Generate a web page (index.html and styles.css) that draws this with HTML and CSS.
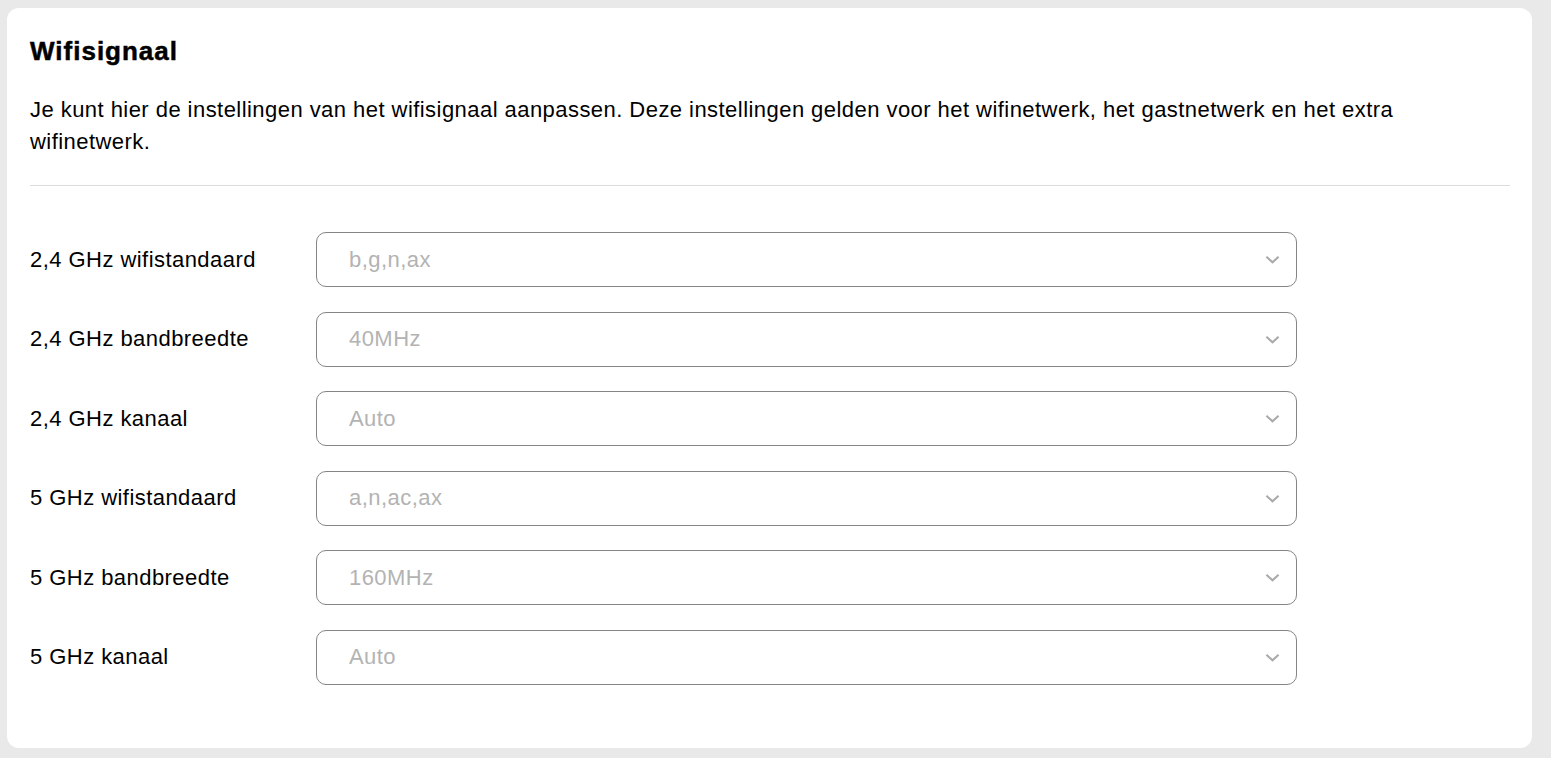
FILE: index.html
```html
<!DOCTYPE html>
<html lang="nl">
<head>
    <meta charset="UTF-8">
    <meta name="viewport" content="width=device-width, initial-scale=1.0">
    <title>Wifisignaal</title>
    <link rel="stylesheet" href="styles.css">
</head>
<body>
    <section class="card">
        <h1 class="card-title">Wifisignaal</h1>
        <p class="intro">Je kunt hier de instellingen van het wifisignaal aanpassen. Deze instellingen gelden voor het wifinetwerk, het gastnetwerk en het extra wifinetwerk.</p>
        <hr class="divider">
        <div class="settings">
            <div class="row">
                <label>2,4 GHz wifistandaard</label>
                <div class="select"><span>b,g,n,ax</span><svg class="chevron" viewBox="0 0 16 9"><path d="M1.5 1.5l6.5 6 6.5-6"/></svg></div>
            </div>
            <div class="row">
                <label>2,4 GHz bandbreedte</label>
                <div class="select"><span>40MHz</span><svg class="chevron" viewBox="0 0 16 9"><path d="M1.5 1.5l6.5 6 6.5-6"/></svg></div>
            </div>
            <div class="row">
                <label>2,4 GHz kanaal</label>
                <div class="select"><span>Auto</span><svg class="chevron" viewBox="0 0 16 9"><path d="M1.5 1.5l6.5 6 6.5-6"/></svg></div>
            </div>
            <div class="row">
                <label>5 GHz wifistandaard</label>
                <div class="select"><span>a,n,ac,ax</span><svg class="chevron" viewBox="0 0 16 9"><path d="M1.5 1.5l6.5 6 6.5-6"/></svg></div>
            </div>
            <div class="row">
                <label>5 GHz bandbreedte</label>
                <div class="select"><span>160MHz</span><svg class="chevron" viewBox="0 0 16 9"><path d="M1.5 1.5l6.5 6 6.5-6"/></svg></div>
            </div>
            <div class="row">
                <label>5 GHz kanaal</label>
                <div class="select"><span>Auto</span><svg class="chevron" viewBox="0 0 16 9"><path d="M1.5 1.5l6.5 6 6.5-6"/></svg></div>
            </div>
        </div>
    </section>
</body>
</html>
```

FILE: styles.css
```css
:root {
    --page-bg: #e9e9e9;
    --card-bg: #ffffff;
    --text-color: #000000;
    --muted-text: #b3b3b3;
    --border-color: #858585;
    --divider-color: #dcdcdc;
}
body {
    font-family: 'Liberation Sans', Arial, sans-serif;
    margin: 0;
    padding: 8px 19px 10px 7px;
    background-color: var(--page-bg);
    color: var(--text-color);
}
.card {
    background-color: var(--card-bg);
    border-radius: 12px;
    padding: 26px 22px 63px 23px;
}
.card-title {
    font-size: 26px;
    line-height: 34px;
    font-weight: 700;
    letter-spacing: 1px;
    -webkit-text-stroke: 0.5px #000;
    margin: 0 0 26px;
}
.intro {
    font-size: 22px;
    line-height: 32px;
    letter-spacing: 0.45px;
    margin: 0;
}
.divider {
    border: none;
    border-top: 1px solid var(--divider-color);
    margin: 27px 0 46px;
}
.settings {
    display: flex;
    flex-direction: column;
    gap: 24.6px;
}
.row {
    display: flex;
    align-items: center;
}
.row label {
    width: 286px;
    font-size: 22px;
    letter-spacing: 0.45px;
}
.select {
    width: 981px;
    height: 55px;
    box-sizing: border-box;
    border: 1px solid var(--border-color);
    border-radius: 10px;
    display: flex;
    align-items: center;
    justify-content: space-between;
    padding: 0 16px 0 32px;
    font-size: 22px;
    letter-spacing: 0.45px;
    color: var(--muted-text);
}
.chevron {
    width: 15px;
    height: 9px;
    fill: none;
    stroke: #aaaaaa;
    stroke-width: 2.2;
}
```
